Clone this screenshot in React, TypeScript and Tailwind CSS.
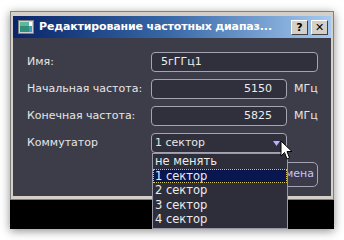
import React from "react";

const font = { fontFamily: '"DejaVu Sans", Verdana, sans-serif' };

function TitleIcon() {
    return (
        <svg width="16" height="14" viewBox="0 0 16 14" className="shrink-0">
            <rect x="0.5" y="0.5" width="15" height="13" fill="#d4d0c8" stroke="#808080" />
            <rect x="2" y="2" width="9" height="10" fill="#2f8f7a" />
            <rect x="2" y="2" width="9" height="4" fill="#5fb89a" />
            <rect x="11" y="2" width="3" height="4" fill="#ffffff" />
            <rect x="11" y="6" width="3" height="6" fill="#3aa0c0" />
        </svg>
    );
}

function CaptionButton({ children }: { children: React.ReactNode }) {
    return (
        <div className="w-[17px] h-[15px] bg-[#d4d0c8] border border-t-white border-l-white border-r-[#404040] border-b-[#404040] flex items-center justify-center text-[11px] font-bold text-black leading-none">
            {children}
        </div>
    );
}

function Field({ value, align = "left", className = "" }: { value: string; align?: "left" | "right"; className?: string }) {
    return (
        <div
            className={`h-[20px] rounded-[4px] border border-[#a4a4b4] bg-[#30303c] flex items-center px-[9px] text-[11px] text-[#ececec] ${
                align === "right" ? "justify-end pr-[14px]" : ""
            } ${className}`}
        >
            {value}
        </div>
    );
}

function Cursor() {
    return (
        <svg width="14" height="21" viewBox="0 0 14 21" className="absolute left-[280px] top-[140px]">
            <path d="M1 1 L1 16 L4.5 12.5 L7 19 L9.5 18 L7 11.5 L12 11.5 Z" fill="#ffffff" stroke="#000000" strokeWidth="1" />
        </svg>
    );
}

export default function App() {
    const items = ["не менять", "1 сектор", "2 сектор", "3 сектор", "4 сектор"];

    return (
        <div className="w-[344px] h-[240px] bg-white relative overflow-hidden" style={font}>
            <div className="absolute left-[10px] top-[11px] w-[324px] shadow-[0_2px_9px_rgba(0,0,0,0.45)]">
                <div className="bg-[#d4d0c8] border border-[#808080] px-[2px] pt-[4px] pb-[3px]">
                    {/* title bar */}
                    <div className="h-[22px] bg-gradient-to-r from-[#0a246a] via-[#3a6aa8] to-[#a6caf0] flex items-center pl-[5px] pr-[3px] gap-[5px]">
                        <TitleIcon />
                        <span className="text-[11px] font-bold text-white whitespace-nowrap flex-1 tracking-[-0.15px]">
                            Редактирование частотных диапаз...
                        </span>
                        <div className="flex gap-[3px] shrink-0">
                            <CaptionButton>?</CaptionButton>
                            <CaptionButton>✕</CaptionButton>
                        </div>
                    </div>

                    {/* body */}
                    <div className="bg-[#3d3d4a] h-[158px] pt-[14px] pl-[14px] pr-[12px] relative">
                        <div className="flex flex-col gap-[7px] text-[11px] text-[#e6e6e6]">
                            <div className="flex items-center">
                                <span className="w-[124px]">Имя:</span>
                                <Field value="5гГГц1" className="w-[167px]" />
                            </div>
                            <div className="flex items-center">
                                <span className="w-[124px] whitespace-nowrap">Начальная частота:</span>
                                <Field value="5150" align="right" className="w-[136px]" />
                                <span className="ml-[7px]">МГц</span>
                            </div>
                            <div className="flex items-center">
                                <span className="w-[124px] whitespace-nowrap">Конечная частота:</span>
                                <Field value="5825" align="right" className="w-[136px]" />
                                <span className="ml-[7px]">МГц</span>
                            </div>
                            <div className="flex items-center">
                                <span className="w-[124px]">Коммутатор</span>
                                <div className="w-[136px] h-[20px] rounded-[4px] border border-[#a4a4b4] bg-[#30303c] flex items-center pl-[3px] pr-[6px] justify-between">
                                    <span>1 сектор</span>
                                    <svg width="7" height="5" viewBox="0 0 7 5"><path d="M0 0 L7 0 L3.5 5 Z" fill="#b4b4ff" /></svg>
                                </div>
                            </div>
                        </div>

                        {/* Отмена button (partly hidden) */}
                        <div className="absolute left-[253px] top-[124px] w-[52px] h-[25px] rounded-[5px] border border-[#a4a4b4] bg-[#3a3a48] flex items-center justify-center text-[11px] text-[#c4c4ff]">
                            Отмена
                        </div>
                    </div>
                </div>
                <div className="h-[29px] bg-black" />
            </div>

            {/* dropdown list */}
            <div className="absolute left-[152px] top-[153px] w-[136px] h-[76px] bg-[#2e2e3a] border border-[#9898a8] text-[11.5px] text-[#ececec] leading-[14.6px]">
                {items.map((it, i) => (
                    <div
                        key={it}
                        className={`px-[2px] h-[14.6px] ${
                            i === 1 ? "bg-[#0a1650] outline outline-1 outline-dotted outline-[#d8c860] -outline-offset-1" : ""
                        }`}
                    >
                        {it}
                    </div>
                ))}
            </div>

            <Cursor />
        </div>
    );
}
